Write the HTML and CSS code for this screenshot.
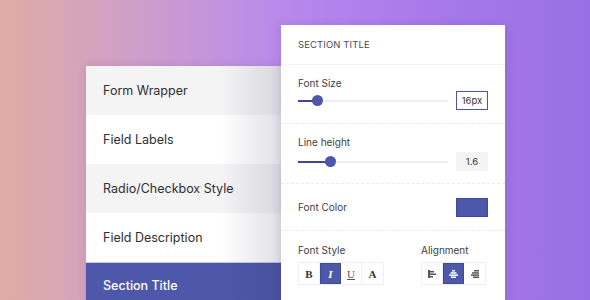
FILE: index.html
```html
<!DOCTYPE html>
<html>
<head>
<meta charset="utf-8">
<link rel="stylesheet" href="styles.css">
</head>
<body>
<div class="stage">
  <div class="menu">
    <div class="item alt">Form Wrapper</div>
    <div class="item">Field Labels</div>
    <div class="item alt">Radio/Checkbox Style</div>
    <div class="item">Field Description</div>
    <div class="item active">Section Title</div>
  </div>
  <div class="panel">
    <div class="panel-head">SECTION TITLE</div>
    <div class="section">
      <div class="label">Font Size</div>
      <div class="row">
        <div class="slider"><div class="fill" style="width:19px"></div><div class="thumb" style="left:19px"></div></div>
        <div class="valbox outlined">16px</div>
      </div>
    </div>
    <div class="section s2">
      <div class="label">Line height</div>
      <div class="row">
        <div class="slider"><div class="fill" style="width:32px"></div><div class="thumb" style="left:32px"></div></div>
        <div class="valbox grey">1.6</div>
      </div>
    </div>
    <div class="section color">
      <div class="label">Font Color</div>
      <div class="swatch"></div>
    </div>
    <div class="section last">
      <div class="group">
        <div class="label">Font Style</div>
        <div class="btns">
          <div class="btn serif b">B</div>
          <div class="btn serif i on">I</div>
          <div class="btn serif u">U</div>
          <div class="btn serif a">A</div>
        </div>
      </div>
      <div class="group align">
        <div class="label">Alignment</div>
        <div class="btns">
          <div class="btn">
            <svg width="9" height="8" viewBox="0 0 9 8"><g fill="#555"><rect x="0" y="0" width="2" height="8"/><rect x="2" y="1" width="4" height="1.5"/><rect x="2" y="3.5" width="6" height="1.5"/><rect x="2" y="6" width="3" height="1.5"/></g></svg>
          </div>
          <div class="btn on">
            <svg width="9" height="8" viewBox="0 0 9 8"><g fill="#fff"><rect x="3" y="0" width="3" height="1.5"/><rect x="1.5" y="2.2" width="6" height="1.5"/><rect x="0" y="4.4" width="9" height="1.5"/><rect x="2" y="6.5" width="5" height="1.5"/></g></svg>
          </div>
          <div class="btn">
            <svg width="9" height="8" viewBox="0 0 9 8"><g fill="#555"><rect x="4" y="0" width="5" height="1.5"/><rect x="2" y="2.2" width="7" height="1.5"/><rect x="1" y="4.4" width="8" height="1.5"/><rect x="3" y="6.5" width="6" height="1.5"/></g></svg>
          </div>
        </div>
      </div>
    </div>
  </div>
</div>
</body>
</html>
```

FILE: styles.css
```css
* { box-sizing: border-box; }
html, body { margin: 0; padding: 0; }
body {
  width: 590px;
  height: 300px;
  overflow: hidden;
  font-family: "Inter", "Noto Sans", sans-serif;
  background: linear-gradient(90deg, #e0aca3 0%, #cf9fc8 22%, #c090e4 40%, #b586ec 52%, #a679e9 75%, #9a6fe5 100%);
}
.stage {
  display: flex;
  align-items: flex-start;
  padding: 25px 0 0 86px;
}
.menu {
  width: 195px;
  margin-top: 41px;
  position: relative;
  box-shadow: 0 0 8px rgba(90, 40, 140, 0.15);
}
.menu::after {
  content: "";
  position: absolute;
  top: 0; right: 0; bottom: 0;
  width: 60px;
  background: linear-gradient(90deg, rgba(40, 40, 80, 0) 0%, rgba(40, 40, 80, 0.14) 100%);
  pointer-events: none;
}
.item {
  height: 49px;
  display: flex;
  align-items: center;
  padding-left: 17px;
  font-size: 12.5px;
  color: #2e2e33;
  background: #fff;
}
.item.alt { background: #f4f4f5; }
.item.active {
  background: #4d58aa;
  color: #fff;
  font-weight: 500;
  border-top: 1px solid #c9c6ea;
  height: 46px;
}
.panel {
  width: 224px;
  height: 290px;
  background: #fff;
  box-shadow: 0 2px 10px rgba(60, 20, 120, 0.18);
  position: relative;
  z-index: 2;
}
.panel-head {
  height: 40px;
  display: flex;
  align-items: center;
  padding-left: 17px;
  font-size: 9.5px;
  letter-spacing: 0.1px;
  color: #4a4a4f;
  border-bottom: 1px solid #f3f3f3;
}
.section {
  padding: 12px 17px 13px 17px;
  border-bottom: 1px dashed #ebebee;
}
.section.s2 { padding-top: 12px; padding-bottom: 12px; }
.label {
  font-size: 10px;
  line-height: 13px;
  color: #404046;
}
.row {
  display: flex;
  align-items: center;
  justify-content: space-between;
  margin-top: 1px;
}
.s2 .row { margin-top: 3px; }
.slider {
  width: 150px;
  height: 2px;
  background: #eeeeef;
  position: relative;
}
.fill {
  position: absolute;
  left: 0; top: 0;
  height: 2px;
  background: #3d479d;
}
.thumb {
  position: absolute;
  top: -4.5px;
  width: 11px;
  height: 11px;
  margin-left: -5.5px;
  border-radius: 50%;
  background: #4d58aa;
}
.valbox {
  width: 32px;
  height: 19px;
  display: flex;
  align-items: center;
  justify-content: center;
  font-size: 9.5px;
  color: #333;
}
.valbox.outlined { border: 1.5px solid #4a55a8; }
.valbox.grey { background: #f4f4f4; }
.section.color {
  height: 47px;
  display: flex;
  align-items: center;
  justify-content: space-between;
  padding-top: 0;
  padding-bottom: 0;
}
.swatch {
  width: 32px;
  height: 19px;
  background: #4d58aa;
  border: 1px solid #3f4a9d;
}
.section.last {
  border-bottom: none;
  display: flex;
  justify-content: space-between;
  padding-top: 13px;
}
.btns {
  display: flex;
  margin-top: 5px;
  border: 1px solid #f0f0f2;
}
.btn {
  width: 21px;
  height: 21px;
  display: flex;
  align-items: center;
  justify-content: center;
  border-right: 1px solid #f0f0f2;
  background: #fff;
}
.btn:last-child { border-right: none; }
.btn.on { background: #4d58aa; border: 1px solid #3f4a9d; }
.serif {
  font-family: "Liberation Serif", serif;
  font-size: 11px;
  font-weight: bold;
  color: #333;
}
.btn.i { font-style: italic; color: #fff; }
.btn.u { text-decoration: underline; color: #555; font-weight: normal; }
.group.align { margin-right: 2px; }
```
